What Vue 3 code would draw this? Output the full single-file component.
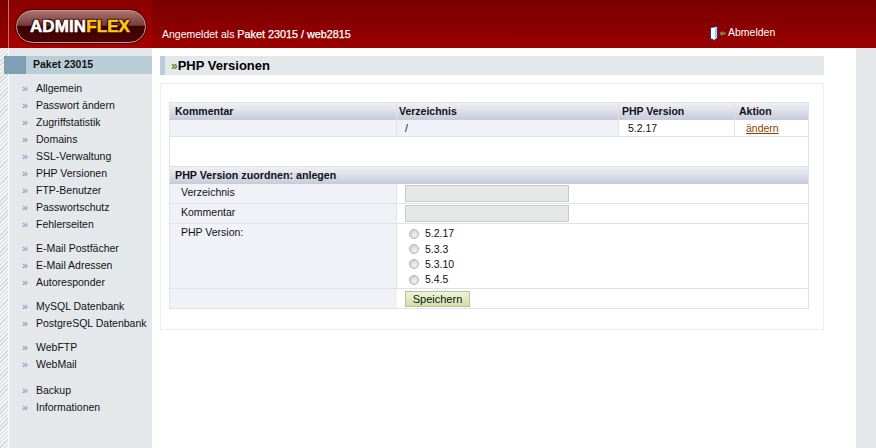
<script setup>
const groups = [
  ['Allgemein', 'Passwort ändern', 'Zugriffstatistik', 'Domains', 'SSL-Verwaltung', 'PHP Versionen', 'FTP-Benutzer', 'Passwortschutz', 'Fehlerseiten'],
  ['E-Mail Postfächer', 'E-Mail Adressen', 'Autoresponder'],
  ['MySQL Datenbank', 'PostgreSQL Datenbank'],
  ['WebFTP', 'WebMail'],
  ['Backup', 'Informationen']
]
const versions = ['5.2.17', '5.3.3', '5.3.10', '5.4.5']
</script>

<template>
  <div class="page">
    <header class="header">
      <div class="logo-zone">
        <div class="logo"><span class="admin">ADMIN</span><span class="flex-word">FLEX</span></div>
      </div>
      <div class="head-main">
        <div class="login">Angemeldet als <b>Paket 23015 / web2815</b></div>
        <a class="logout">
          <svg width="16" height="15" viewBox="0 0 16 15">
            <path d="M0.5 1.5L7.5 0.5V12L4 14.5L2.5 13.2L0.5 13z" fill="#fff" stroke="#1f2c6e" stroke-width="0.9" />
            <path d="M5 2.5L6.8 1.8V11.5L5 12.6z" fill="#a9bce4" />
            <path d="M9.5 7.5L12.4 4.8v1.8H15.5v1.8H12.4v1.8z" fill="#7f8f44" />
          </svg>
          <span>Abmelden</span>
        </a>
      </div>
    </header>
    <div class="body">
      <aside class="side">
        <div class="side-title"><span class="side-square"></span><span class="side-name">Paket 23015</span></div>
        <ul v-for="(g, i) in groups" :key="i" class="menu">
          <li v-for="item in g" :key="item"><span class="bullet">»</span><span>{{ item }}</span></li>
        </ul>
      </aside>
      <main class="main">
        <h1 class="title"><span class="title-mark">»</span>PHP Versionen</h1>
        <section class="box">
          <table class="grid">
            <colgroup><col class="c1" /><col class="c2" /><col class="c3" /><col class="c4" /></colgroup>
            <tbody>
              <tr class="head">
                <th>Kommentar</th><th>Verzeichnis</th><th>PHP Version</th><th>Aktion</th>
              </tr>
              <tr class="data">
                <td class="shade"></td>
                <td class="shade ind">/</td>
                <td class="ind">5.2.17</td>
                <td class="ind"><a class="change">ändern</a></td>
              </tr>
              <tr class="blank"><td colspan="4"></td></tr>
              <tr class="head sub"><th colspan="4">PHP Version zuordnen: anlegen</th></tr>
              <tr class="field">
                <td class="shade lbl">Verzeichnis</td>
                <td colspan="3" class="val"><input class="inp" type="text" /></td>
              </tr>
              <tr class="field">
                <td class="shade lbl">Kommentar</td>
                <td colspan="3" class="val"><input class="inp" type="text" /></td>
              </tr>
              <tr class="radios">
                <td class="shade lbl top">PHP Version:</td>
                <td colspan="3" class="val">
                  <label v-for="v in versions" :key="v" class="radio"><input type="radio" name="v" /><span>{{ v }}</span></label>
                </td>
              </tr>
              <tr class="actions">
                <td class="shade"></td>
                <td colspan="3" class="val"><button class="save" type="button">Speichern</button></td>
              </tr>
            </tbody>
          </table>
        </section>
      </main>
      <div class="right"></div>
    </div>
  </div>
</template>

<style>
html, body { margin: 0; background: #fff; }
</style>

<style scoped>
.page {
  width: 876px;
  height: 448px;
  overflow: hidden;
  font-family: "Liberation Sans", Arial, sans-serif;
  font-size: 10.5px;
  color: #111;
}
.header {
  height: 48px;
  display: flex;
  background: linear-gradient(#780000, #9a0000);
}
.logo-zone {
  width: 144px;
  margin-left: 8px;
  flex: none;
  border-left: 1px solid #c87070;
  background: linear-gradient(#8a0000, #a80000);
  padding: 10px 0 0 7px;
  box-sizing: border-box;
}
.logo {
  width: 130px;
  height: 33px;
  box-sizing: border-box;
  border: 1px solid #c09a94;
  box-shadow: 0 0 0 1px #4a0404;
  border-radius: 17px;
  background: linear-gradient(#a87470 0, #7a3a38 46%, #3a0202 50%, #4e0404 100%);
  padding-right: 2px;
  text-align: center;
  line-height: 31px;
  font-size: 17px;
  font-weight: 700;
  letter-spacing: 0.1px;
  white-space: nowrap;
}
.admin {
  color: #fff;
  -webkit-text-stroke: 0.5px #fff;
  text-shadow: 0 0 2px #5a1000, 1px 1px 1px #2a0000, -1px -1px 1px #2a0000, 1px -1px 1px #2a0000, -1px 1px 1px #2a0000;
}
.flex-word {
  color: #fbc81e;
  -webkit-text-stroke: 0.5px #fbc81e;
  text-shadow: 0 0 2px #5a1000, 1px 1px 1px #2a0000, -1px -1px 1px #2a0000, 1px -1px 1px #2a0000, -1px 1px 1px #2a0000;
}
.head-main {
  flex: 1;
  display: flex;
  position: relative;
  padding-left: 10px;
  color: #fff;
}
.login { margin-top: 27px; font-size: 10.5px; line-height: 14px; white-space: nowrap; }
.login b { font-weight: 400; font-size: 10.8px; -webkit-text-stroke: 0.25px #fff; }
.logout {
  position: absolute;
  left: 558px;
  top: 26px;
  display: flex;
  align-items: flex-start;
  color: #fff;
  line-height: 13px;
}
.logout svg { margin-right: 2px; }
.body { display: flex; height: 400px; }
.side {
  width: 152px;
  flex: none;
  box-sizing: border-box;
  padding-top: 8px;
  background-color: #e4e8eb;
  background-image: linear-gradient(#fafbfb, #fafbfb), repeating-linear-gradient(135deg, #d4d6d8 0 1px, #f2f3f4 1px 3px);
  background-size: 1px 100%, 8px 100%;
  background-position: 8px 0, 0 0;
  background-repeat: no-repeat;
}
.side-title {
  margin-left: 4px;
  height: 18px;
  display: flex;
  background: #b9cdd6;
  font-weight: 700;
  line-height: 16px;
}
.side-square { width: 22px; background: #7fa0b4; }
.side-name { margin-left: 7px; }
.menu { list-style: none; margin: 6px 0 0; padding: 0; }
.menu + .menu { margin-top: 7px; }
.menu:last-child { margin-top: 9px; }
.menu li {
  height: 17px;
  line-height: 17px;
  padding-left: 22px;
  display: flex;
  white-space: nowrap;
}
.bullet { width: 14px; color: #8a7fb0; flex: none; }
.main { width: 704px; flex: none; box-sizing: border-box; padding: 8px 32px 0 8px; background: #fff; }
.title {
  margin: 0;
  height: 19px;
  box-sizing: border-box;
  border-left: 5px solid #b9cdd6;
  background: #e4e8eb;
  font-size: 13px;
  line-height: 20px;
  font-weight: 700;
  color: #000;
  padding-left: 6px;
}
.title-mark { color: #5f7f2a; font-size: 12px; }
.box {
  margin-top: 8px;
  height: 247px;
  box-sizing: border-box;
  border: 1px solid #eceef0;
  padding: 18px 14px 0 8px;
}
.grid {
  width: 640px;
  table-layout: fixed;
  border-collapse: separate;
  border-spacing: 0;
  border: 1px solid #dfe2ee;
}
.c1 { width: 227px; }
.c2 { width: 222px; }
.c3 { width: 116px; }
.c4 { width: 73px; }
th, td { padding: 0; border: 0; }
tr > * { box-sizing: border-box; }
.head th {
  height: 17px;
  padding: 0 2px;
  text-align: left;
  font-weight: 700;
  line-height: 17px;
  color: #111;
  background: linear-gradient(#f0f1f6, #c6cadb);
  border-right: 1px solid #dde0ec;
}
.head th:first-child { padding-left: 5px; }
.head th:nth-child(3) { padding-left: 3px; }
.head th:nth-child(4) { border-right: 0; padding-left: 4px; }
.sub th { font-size: 10.7px; border-right: 0; }
.data td { height: 17px; border-bottom: 1px solid #dfe2ee; border-right: 1px solid #dfe2ee; line-height: 16px; }
.data td:last-child { border-right: 0; }
.shade { background: #f0f2f8; }
.ind { padding-left: 8px; }
.data td:nth-child(3) { padding-left: 9px; }
.data td:nth-child(4) { padding-left: 11px; }
.change { color: #8a4300; text-decoration: underline; }
.blank td { height: 30px; border-bottom: 1px solid #dfe2ee; }
.field td { height: 20px; border-bottom: 1px solid #dfe2ee; }
.lbl { padding: 0 0 3px 11px; border-right: 1px solid #dfe2ee; vertical-align: middle; }
.lbl.top { vertical-align: top; padding-top: 1px; padding-bottom: 0; line-height: 14px; }
.val { padding-left: 8px; vertical-align: middle; }
.inp {
  display: block;
  width: 164px;
  height: 17px;
  box-sizing: border-box;
  margin: 0;
  background: #e6e8e8;
  border: 1px solid #c8cac8;
  padding: 0;
}
.radios td { height: 65px; border-bottom: 1px solid #dfe2ee; }
.radios .val { padding-top: 2px; vertical-align: top; }
.radio { display: flex; align-items: center; height: 15.4px; line-height: 15px; }
.radio input {
  appearance: none;
  width: 8px;
  height: 8px;
  margin: 0 6px 0 4px;
  border-radius: 50%;
  border: 1px solid #b4b4b4;
  background: radial-gradient(circle at 60% 65%, #f4f4f4, #c4c4c4);
  box-sizing: content-box;
  flex: none;
}
.actions td { height: 19px; }
.save {
  display: block;
  width: 65px;
  height: 16px;
  box-sizing: border-box;
  margin: 0;
  padding: 0;
  font: 11px/14px "Liberation Sans", Arial, sans-serif;
  color: #111;
  background: linear-gradient(#eef4d8, #cfe0a8);
  border: 1px solid #b7c49a;
}
.right { flex: 1; background: #e4e8eb; }
</style>
